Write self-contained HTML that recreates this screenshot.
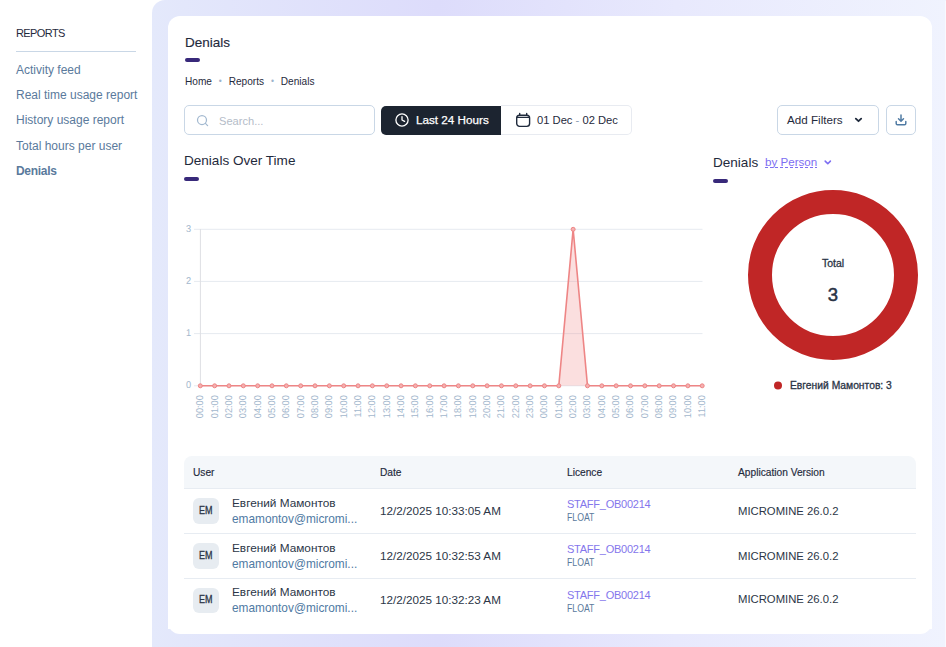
<!DOCTYPE html>
<html lang="en">
<head>
<meta charset="utf-8">
<title>Denials</title>
<style>
*{box-sizing:border-box;margin:0;padding:0}
html,body{width:946px;height:647px;overflow:hidden;background:#fff}
body{font-family:"Liberation Sans","DejaVu Sans",sans-serif;color:#1f2a3c;position:relative}
a{text-decoration:none;color:inherit}
ul{list-style:none}

/* sidebar */
.side{position:absolute;left:0;top:0;width:152px;height:647px;background:#fff}
.side h3{position:absolute;left:16px;top:25.4px;font-size:11px;font-weight:400;color:#1f2a3c;line-height:16px;letter-spacing:-.6px}
.side hr{position:absolute;left:16px;top:51px;width:120px;height:1px;border:0;background:#c9d7e6}
.side ul{position:absolute;left:16px;top:57.7px}
.side li{height:25.4px;line-height:25.4px;font-size:12px;color:#5a7a9c;white-space:nowrap}
.side li.on{font-weight:700;letter-spacing:-.3px}

/* main */
.main{position:absolute;left:152px;top:0;width:794px;height:647px;border-top-left-radius:13px;
 background:linear-gradient(90deg,#e4e9fb 0%,#e3e7fb 4%,#dddcfb 36%,#e8e9fd 66%,#f0f3fe 100%)}
.card{position:absolute;left:16px;top:16px;width:764px;height:613px;background:#fff;border-radius:12px 12px 0 0}
.foot{position:absolute;left:16px;top:629px;width:764px;height:5px;overflow:hidden}
.foot i{position:absolute;left:0;bottom:0;width:764px;height:24px;border-radius:12px;background:#fff}
.edge{position:absolute;right:0;top:1px;width:1px;height:646px;background:#f8f9ff}

.title{position:absolute;left:17px;top:16.6px;font-size:13.5px;line-height:20px;font-weight:400;color:#1f2a3c;-webkit-text-stroke:.15px #1f2a3c}
.bar{position:absolute;width:15px;height:4px;border-radius:2px;background:#38297a}
.crumbs{position:absolute;left:17px;top:58px;font-size:10.1px;line-height:14px;color:#1f2a3c;white-space:nowrap}
.crumbs i{font-style:normal;color:#9db3cc;margin:0 6.9px;font-size:8.5px;vertical-align:.5px}

.search{position:absolute;left:16px;top:89px;width:191px;height:30px;border:1px solid #c9d7e6;border-radius:5px;background:#fff}
.search span{position:absolute;left:34px;top:7.7px;font-size:11.1px;line-height:15px;color:#b4bcc8}
.search svg{position:absolute;left:10px;top:6.5px}
.btn-dark{position:absolute;left:213px;top:90px;width:120px;height:29px;background:#1c2430;border-radius:5px 0 0 5px;color:#fff;font-size:11.7px;line-height:28px;-webkit-text-stroke:.25px #fff}
.btn-dark span{position:absolute;left:35px;top:0}
.btn-dark svg{position:absolute;left:14px;top:7px}
.btn-date{position:absolute;left:333px;top:89px;width:131px;height:30px;border:1px solid #e8ebf1;border-left:0;border-radius:0 5px 5px 0;color:#1f2a3c;font-size:11.2px;line-height:28px;background:#fff}
.btn-date span{position:absolute;left:36px;top:0;white-space:nowrap}
.btn-date svg{position:absolute;left:15px;top:6px;overflow:visible}
.btn-date b{font-weight:400;color:#8c9db5}
.btn-f{position:absolute;left:609px;top:89px;width:102px;height:30px;border:1px solid #c9d7e6;border-radius:5px;font-size:11.65px;line-height:28px;color:#1f2a3c;background:#fff}
.btn-f span{position:absolute;left:9px;top:0;white-space:nowrap}
.btn-f svg{position:absolute;left:76px;top:10px}
.btn-d{position:absolute;left:718px;top:89px;width:30px;height:30px;border:1px solid #c9d7e6;border-radius:5px;background:#fff}
.btn-d svg{position:absolute;left:8.4px;top:7.6px}

.h2{position:absolute;font-weight:400;font-size:13.55px;line-height:20px;color:#1f2a3c;white-space:nowrap}
.by{position:absolute;font-size:11.6px;line-height:20px;color:#7d6ef2;white-space:nowrap;border-bottom:0}
.by u{text-decoration:none;display:inline-block;height:20px;line-height:18.6px;vertical-align:top;background:repeating-linear-gradient(90deg,#7d6ef2 0 3px,transparent 3px 5px) 0 14px/100% 1px no-repeat}
.by svg{position:absolute;left:58.9px;top:5.9px}

.chart{position:absolute;left:0;top:190px}
.donut{position:absolute;left:560px;top:160px}

table{position:absolute;left:16px;top:440px;width:732px;border-collapse:collapse;table-layout:fixed}
th{height:32px;background:#f4f7fa;font-size:10.2px;font-weight:400;text-align:left;color:#1f2a3c;padding:2px 0 0 9px;-webkit-text-stroke:.15px #1f2a3c}
th:first-child{border-top-left-radius:8px}
th:last-child{border-top-right-radius:8px}
td{height:45px;border-top:1px solid #e7ecf2;font-size:11.7px;color:#2c3647;padding:0 0 0 9px;vertical-align:middle;white-space:nowrap}
.u{display:flex;align-items:center}
.av{width:26px;height:26px;border-radius:6px;background:#e7ecf1;font-size:10.2px;font-weight:400;-webkit-text-stroke:.3px #2b3647;text-align:center;line-height:26px;color:#2b3647;flex:none}
.u div.t{margin-left:13px;line-height:16px;font-size:11.8px}
.u .e{color:#4f7aa3;display:block;font-size:11.85px}
.lic a{color:#8476ec;font-size:11px;letter-spacing:-.25px;display:block;line-height:14px;position:relative;top:-.9px}
.lic small{color:#5a7a9c;font-size:10.3px;display:block;line-height:12px;position:relative;top:.2px;transform:scaleX(.845);transform-origin:0 50%}
tbody tr:last-child td{height:44px}
td.ver{font-size:11.3px}
tbody tr:last-child .av{height:24.6px;line-height:24.6px;margin-top:.8px}
.av span{display:inline-block;transform:scaleX(.88)}
tbody tr:last-child td:nth-child(2),tbody tr:last-child td:nth-child(4){padding-bottom:2px}
tbody tr:last-child td.lic{padding-top:2.5px}
</style>
</head>
<body>
<nav class="side">
  <h3>REPORTS</h3>
  <hr>
  <ul>
    <li><a>Activity feed</a></li>
    <li><a>Real time usage report</a></li>
    <li><a>History usage report</a></li>
    <li><a>Total hours per user</a></li>
    <li class="on"><a>Denials</a></li>
  </ul>
</nav>
<main class="main">
 <section class="card">
  <h1 class="title">Denials</h1>
  <div class="bar" style="left:17px;top:42px"></div>
  <div class="crumbs"><a>Home</a><i>•</i><a>Reports</a><i>•</i><a>Denials</a></div>

  <div class="search">
    <svg width="16" height="16" viewBox="0 0 16 16" fill="none" stroke="#a3b9d0" stroke-width="1.25" stroke-linecap="round"><circle cx="7" cy="7" r="4.5"/><path d="M10.4 10.4L12.6 12.6"/></svg>
    <span>Search...</span>
  </div>
  <div class="btn-dark">
    <svg width="14" height="14" viewBox="0 0 14 14" fill="none" stroke="#fff" stroke-width="1.3" stroke-linecap="round" stroke-linejoin="round"><circle cx="7" cy="7" r="6.1"/><path d="M7 3.6V7l2.6 1.4"/></svg>
    <span>Last 24 Hours</span>
  </div>
  <div class="btn-date">
    <svg width="15" height="16" viewBox="0 0 15 16" fill="none" stroke="#1f2a3c" stroke-width="1.4" stroke-linecap="round" stroke-linejoin="round"><rect x="0.7" y="3.3" width="12.9" height="11.1" rx="2.8"/><path d="M3.7 1.5v1.8M10.7 1.5v1.8M1 5.4h12.3"/></svg>
    <span>01 Dec <b>-</b> 02 Dec</span>
  </div>
  <div class="btn-f">
    <span>Add Filters</span>
    <svg width="9" height="8" viewBox="0 0 9 8" fill="none" stroke="#1f2a3c" stroke-width="1.8" stroke-linecap="round" stroke-linejoin="round"><path d="M1.8 2.6l2.7 2.6 2.7-2.6"/></svg>
  </div>
  <div class="btn-d">
    <svg width="12" height="12" viewBox="0 0 13 13" fill="none" stroke="#4f7aa3" stroke-width="1.6" stroke-linecap="round" stroke-linejoin="round"><path d="M6.5 1.2v6.4M3.8 5.2l2.7 2.6 2.7-2.6M1.3 8.2v2.1a1.4 1.4 0 0 0 1.4 1.4h7.6a1.4 1.4 0 0 0 1.4-1.4V8.2"/></svg>
  </div>

  <h2 class="h2" style="left:16px;top:135.2px">Denials Over Time</h2>
  <div class="bar" style="left:16px;top:161px"></div>

  <h2 class="h2" style="left:545px;top:137px">Denials</h2>
  <div class="by" style="left:597px;top:137px"><u>by Person</u>
    <svg width="8" height="7" viewBox="0 0 8 7" fill="none" stroke="#7d6ef2" stroke-width="1.6" stroke-linecap="round" stroke-linejoin="round"><path d="M1.2 2.1l2.6 2.6 2.6-2.6"/></svg>
  </div>
  <div class="bar" style="left:545px;top:163px"></div>

  <svg class="chart" width="560" height="250" viewBox="168 206 560 250" id="chart">
<g font-family="Liberation Sans, sans-serif" font-size="9.9" text-rendering="geometricPrecision" fill="#a3b7cd">
<path d="M194 385.8H702.5" stroke="#e6eaf0" stroke-width="1" fill="none"/>
<text transform="translate(191.2 388.0) scale(.93 1)" text-anchor="end">0</text>
<path d="M194 333.6H702.5" stroke="#e6eaf0" stroke-width="1" fill="none"/>
<text transform="translate(191.2 335.8) scale(.93 1)" text-anchor="end">1</text>
<path d="M194 281.4H702.5" stroke="#e6eaf0" stroke-width="1" fill="none"/>
<text transform="translate(191.2 283.6) scale(.93 1)" text-anchor="end">2</text>
<path d="M194 229.3H702.5" stroke="#e6eaf0" stroke-width="1" fill="none"/>
<text transform="translate(191.2 231.5) scale(.93 1)" text-anchor="end">3</text>
<path d="M200.4 229V385.5" stroke="#dedfe3" stroke-width="1" fill="none"/>
<path d="M200.30 385.8 L214.64 385.8 L228.98 385.8 L243.32 385.8 L257.66 385.8 L272.00 385.8 L286.34 385.8 L300.68 385.8 L315.02 385.8 L329.36 385.8 L343.70 385.8 L358.04 385.8 L372.38 385.8 L386.72 385.8 L401.06 385.8 L415.40 385.8 L429.74 385.8 L444.08 385.8 L458.42 385.8 L472.76 385.8 L487.10 385.8 L501.44 385.8 L515.78 385.8 L530.12 385.8 L544.46 385.8 L558.80 385.8 L573.14 229.3 L587.48 385.8 L601.82 385.8 L616.16 385.8 L630.50 385.8 L644.84 385.8 L659.18 385.8 L673.52 385.8 L687.86 385.8 L702.20 385.8 L702.2 385.8 L200.3 385.8Z" fill="#f28b8b" fill-opacity="0.28" stroke="none"/>
<path d="M200.30 385.8 L214.64 385.8 L228.98 385.8 L243.32 385.8 L257.66 385.8 L272.00 385.8 L286.34 385.8 L300.68 385.8 L315.02 385.8 L329.36 385.8 L343.70 385.8 L358.04 385.8 L372.38 385.8 L386.72 385.8 L401.06 385.8 L415.40 385.8 L429.74 385.8 L444.08 385.8 L458.42 385.8 L472.76 385.8 L487.10 385.8 L501.44 385.8 L515.78 385.8 L530.12 385.8 L544.46 385.8 L558.80 385.8 L573.14 229.3 L587.48 385.8 L601.82 385.8 L616.16 385.8 L630.50 385.8 L644.84 385.8 L659.18 385.8 L673.52 385.8 L687.86 385.8 L702.20 385.8" fill="none" stroke="#ee8585" stroke-width="1.6" stroke-linejoin="round"/>
<circle cx="200.30" cy="385.8" r="2" fill="#f5b0b0" stroke="#ee8585" stroke-width="1"/>
<circle cx="214.64" cy="385.8" r="2" fill="#f5b0b0" stroke="#ee8585" stroke-width="1"/>
<circle cx="228.98" cy="385.8" r="2" fill="#f5b0b0" stroke="#ee8585" stroke-width="1"/>
<circle cx="243.32" cy="385.8" r="2" fill="#f5b0b0" stroke="#ee8585" stroke-width="1"/>
<circle cx="257.66" cy="385.8" r="2" fill="#f5b0b0" stroke="#ee8585" stroke-width="1"/>
<circle cx="272.00" cy="385.8" r="2" fill="#f5b0b0" stroke="#ee8585" stroke-width="1"/>
<circle cx="286.34" cy="385.8" r="2" fill="#f5b0b0" stroke="#ee8585" stroke-width="1"/>
<circle cx="300.68" cy="385.8" r="2" fill="#f5b0b0" stroke="#ee8585" stroke-width="1"/>
<circle cx="315.02" cy="385.8" r="2" fill="#f5b0b0" stroke="#ee8585" stroke-width="1"/>
<circle cx="329.36" cy="385.8" r="2" fill="#f5b0b0" stroke="#ee8585" stroke-width="1"/>
<circle cx="343.70" cy="385.8" r="2" fill="#f5b0b0" stroke="#ee8585" stroke-width="1"/>
<circle cx="358.04" cy="385.8" r="2" fill="#f5b0b0" stroke="#ee8585" stroke-width="1"/>
<circle cx="372.38" cy="385.8" r="2" fill="#f5b0b0" stroke="#ee8585" stroke-width="1"/>
<circle cx="386.72" cy="385.8" r="2" fill="#f5b0b0" stroke="#ee8585" stroke-width="1"/>
<circle cx="401.06" cy="385.8" r="2" fill="#f5b0b0" stroke="#ee8585" stroke-width="1"/>
<circle cx="415.40" cy="385.8" r="2" fill="#f5b0b0" stroke="#ee8585" stroke-width="1"/>
<circle cx="429.74" cy="385.8" r="2" fill="#f5b0b0" stroke="#ee8585" stroke-width="1"/>
<circle cx="444.08" cy="385.8" r="2" fill="#f5b0b0" stroke="#ee8585" stroke-width="1"/>
<circle cx="458.42" cy="385.8" r="2" fill="#f5b0b0" stroke="#ee8585" stroke-width="1"/>
<circle cx="472.76" cy="385.8" r="2" fill="#f5b0b0" stroke="#ee8585" stroke-width="1"/>
<circle cx="487.10" cy="385.8" r="2" fill="#f5b0b0" stroke="#ee8585" stroke-width="1"/>
<circle cx="501.44" cy="385.8" r="2" fill="#f5b0b0" stroke="#ee8585" stroke-width="1"/>
<circle cx="515.78" cy="385.8" r="2" fill="#f5b0b0" stroke="#ee8585" stroke-width="1"/>
<circle cx="530.12" cy="385.8" r="2" fill="#f5b0b0" stroke="#ee8585" stroke-width="1"/>
<circle cx="544.46" cy="385.8" r="2" fill="#f5b0b0" stroke="#ee8585" stroke-width="1"/>
<circle cx="558.80" cy="385.8" r="2" fill="#f5b0b0" stroke="#ee8585" stroke-width="1"/>
<circle cx="573.14" cy="229.3" r="2" fill="#f5b0b0" stroke="#ee8585" stroke-width="1"/>
<circle cx="587.48" cy="385.8" r="2" fill="#f5b0b0" stroke="#ee8585" stroke-width="1"/>
<circle cx="601.82" cy="385.8" r="2" fill="#f5b0b0" stroke="#ee8585" stroke-width="1"/>
<circle cx="616.16" cy="385.8" r="2" fill="#f5b0b0" stroke="#ee8585" stroke-width="1"/>
<circle cx="630.50" cy="385.8" r="2" fill="#f5b0b0" stroke="#ee8585" stroke-width="1"/>
<circle cx="644.84" cy="385.8" r="2" fill="#f5b0b0" stroke="#ee8585" stroke-width="1"/>
<circle cx="659.18" cy="385.8" r="2" fill="#f5b0b0" stroke="#ee8585" stroke-width="1"/>
<circle cx="673.52" cy="385.8" r="2" fill="#f5b0b0" stroke="#ee8585" stroke-width="1"/>
<circle cx="687.86" cy="385.8" r="2" fill="#f5b0b0" stroke="#ee8585" stroke-width="1"/>
<circle cx="702.20" cy="385.8" r="2" fill="#f5b0b0" stroke="#ee8585" stroke-width="1"/>
<text transform="translate(203.20 395.2) rotate(-90) scale(.93 1)" text-anchor="end">00:00</text>
<text transform="translate(217.54 395.2) rotate(-90) scale(.93 1)" text-anchor="end">01:00</text>
<text transform="translate(231.88 395.2) rotate(-90) scale(.93 1)" text-anchor="end">02:00</text>
<text transform="translate(246.22 395.2) rotate(-90) scale(.93 1)" text-anchor="end">03:00</text>
<text transform="translate(260.56 395.2) rotate(-90) scale(.93 1)" text-anchor="end">04:00</text>
<text transform="translate(274.90 395.2) rotate(-90) scale(.93 1)" text-anchor="end">05:00</text>
<text transform="translate(289.24 395.2) rotate(-90) scale(.93 1)" text-anchor="end">06:00</text>
<text transform="translate(303.58 395.2) rotate(-90) scale(.93 1)" text-anchor="end">07:00</text>
<text transform="translate(317.92 395.2) rotate(-90) scale(.93 1)" text-anchor="end">08:00</text>
<text transform="translate(332.26 395.2) rotate(-90) scale(.93 1)" text-anchor="end">09:00</text>
<text transform="translate(346.60 395.2) rotate(-90) scale(.93 1)" text-anchor="end">10:00</text>
<text transform="translate(360.94 395.2) rotate(-90) scale(.93 1)" text-anchor="end">11:00</text>
<text transform="translate(375.28 395.2) rotate(-90) scale(.93 1)" text-anchor="end">12:00</text>
<text transform="translate(389.62 395.2) rotate(-90) scale(.93 1)" text-anchor="end">13:00</text>
<text transform="translate(403.96 395.2) rotate(-90) scale(.93 1)" text-anchor="end">14:00</text>
<text transform="translate(418.30 395.2) rotate(-90) scale(.93 1)" text-anchor="end">15:00</text>
<text transform="translate(432.64 395.2) rotate(-90) scale(.93 1)" text-anchor="end">16:00</text>
<text transform="translate(446.98 395.2) rotate(-90) scale(.93 1)" text-anchor="end">17:00</text>
<text transform="translate(461.32 395.2) rotate(-90) scale(.93 1)" text-anchor="end">18:00</text>
<text transform="translate(475.66 395.2) rotate(-90) scale(.93 1)" text-anchor="end">19:00</text>
<text transform="translate(490.00 395.2) rotate(-90) scale(.93 1)" text-anchor="end">20:00</text>
<text transform="translate(504.34 395.2) rotate(-90) scale(.93 1)" text-anchor="end">21:00</text>
<text transform="translate(518.68 395.2) rotate(-90) scale(.93 1)" text-anchor="end">22:00</text>
<text transform="translate(533.02 395.2) rotate(-90) scale(.93 1)" text-anchor="end">23:00</text>
<text transform="translate(547.36 395.2) rotate(-90) scale(.93 1)" text-anchor="end">00:00</text>
<text transform="translate(561.70 395.2) rotate(-90) scale(.93 1)" text-anchor="end">01:00</text>
<text transform="translate(576.04 395.2) rotate(-90) scale(.93 1)" text-anchor="end">02:00</text>
<text transform="translate(590.38 395.2) rotate(-90) scale(.93 1)" text-anchor="end">03:00</text>
<text transform="translate(604.72 395.2) rotate(-90) scale(.93 1)" text-anchor="end">04:00</text>
<text transform="translate(619.06 395.2) rotate(-90) scale(.93 1)" text-anchor="end">05:00</text>
<text transform="translate(633.40 395.2) rotate(-90) scale(.93 1)" text-anchor="end">06:00</text>
<text transform="translate(647.74 395.2) rotate(-90) scale(.93 1)" text-anchor="end">07:00</text>
<text transform="translate(662.08 395.2) rotate(-90) scale(.93 1)" text-anchor="end">08:00</text>
<text transform="translate(676.42 395.2) rotate(-90) scale(.93 1)" text-anchor="end">09:00</text>
<text transform="translate(690.76 395.2) rotate(-90) scale(.93 1)" text-anchor="end">10:00</text>
<text transform="translate(705.10 395.2) rotate(-90) scale(.93 1)" text-anchor="end">11:00</text>
</g>
</svg>

  <svg class="donut" width="204" height="240" viewBox="728 176 204 240">
    <circle cx="833" cy="275" r="73" fill="none" stroke="#c02626" stroke-width="24"/>
    <text x="833" y="267" text-anchor="middle" font-size="10.5" fill="#2a3446" stroke="#2a3446" stroke-width=".3" font-family="Liberation Sans, sans-serif">Total</text>
    <text x="833" y="301" text-anchor="middle" font-size="18.5" fill="#2a3446" stroke="#2a3446" stroke-width=".5" font-family="Liberation Sans, sans-serif">3</text>
    <circle cx="778" cy="385.5" r="4" fill="#c02626"/>
    <text x="790" y="389" font-size="10.3" fill="#2a3446" stroke="#2a3446" stroke-width=".3" font-family="Liberation Sans, sans-serif">Евгений Мамонтов: 3</text>
  </svg>

  <table>
   <colgroup><col style="width:187px"><col style="width:187px"><col style="width:171px"><col></colgroup>
   <thead><tr><th>User</th><th>Date</th><th>Licence</th><th>Application Version</th></tr></thead>
   <tbody>
    <tr><td><div class="u"><div class="av"><span>ЕМ</span></div><div class="t">Евгений Мамонтов<a class="e">emamontov@micromi...</a></div></div></td><td>12/2/2025 10:33:05 AM</td><td class="lic"><a>STAFF_OB00214</a><small>FLOAT</small></td><td class="ver">MICROMINE 26.0.2</td></tr>
    <tr><td><div class="u"><div class="av"><span>ЕМ</span></div><div class="t">Евгений Мамонтов<a class="e">emamontov@micromi...</a></div></div></td><td>12/2/2025 10:32:53 AM</td><td class="lic"><a>STAFF_OB00214</a><small>FLOAT</small></td><td class="ver">MICROMINE 26.0.2</td></tr>
    <tr><td><div class="u"><div class="av"><span>ЕМ</span></div><div class="t">Евгений Мамонтов<a class="e">emamontov@micromi...</a></div></div></td><td>12/2/2025 10:32:23 AM</td><td class="lic"><a>STAFF_OB00214</a><small>FLOAT</small></td><td class="ver">MICROMINE 26.0.2</td></tr>
   </tbody>
  </table>
 </section>
 <div class="foot"><i></i></div>
 <div class="edge"></div>
</main>
</body>
</html>
